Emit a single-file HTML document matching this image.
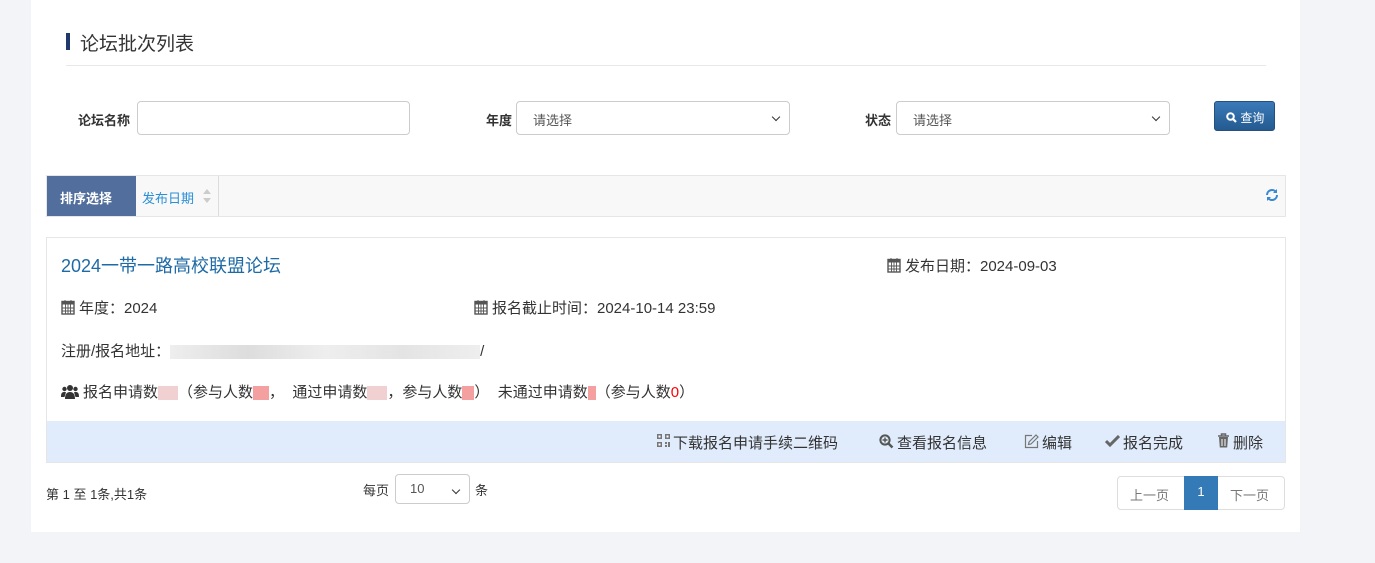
<!DOCTYPE html>
<html><head><meta charset="utf-8"><style>
*{box-sizing:border-box;margin:0;padding:0}
body{width:1375px;height:563px;background:#f3f4f8;font-family:"Liberation Sans","Noto Sans CJK SC",sans-serif;position:relative;overflow:hidden;color:#333}
.p{position:absolute;left:31px;top:0;width:1269px;height:532px;background:#fff}
.a{position:absolute}
.lbl{font-size:13px;font-weight:bold;color:#333}
.inp{border:1px solid #ccc;border-radius:4px;height:34px;background:#fff;font-size:13px;color:#555;padding:8px 16px}
.sel::after{content:"";position:absolute;right:10px;top:12px;width:5px;height:5px;border-right:1.5px solid #333;border-bottom:1.5px solid #333;transform:rotate(45deg)}
.t14{font-size:15px;color:#333;white-space:nowrap}
.blur{display:inline-block;height:14px;vertical-align:middle;background:#f0d0d0}
.ic{vertical-align:-2px;margin-right:4px}
</style></head><body>
<div class="p"></div>
<div class="a" style="left:66px;top:33px;width:4px;height:17px;background:#1f3a6a"></div>
<div class="a" style="left:80px;top:29px;font-size:19px;color:#333">论坛批次列表</div>
<div class="a" style="left:66px;top:65px;width:1200px;height:1px;background:#e8e8e8"></div>

<div class="a lbl" style="left:78px;top:110px">论坛名称</div>
<div class="a inp" style="left:137px;top:101px;width:273px"></div>
<div class="a lbl" style="left:486px;top:110px">年度</div>
<div class="a inp sel" style="left:516px;top:101px;width:274px">请选择</div>
<div class="a lbl" style="left:865px;top:110px">状态</div>
<div class="a inp sel" style="left:896px;top:101px;width:274px">请选择</div>
<div class="a" style="left:1214px;top:101px;width:61px;height:30px;border-radius:3px;background:linear-gradient(#3a7ab8,#245a90);border:1px solid #245080;color:#fff;font-size:12px;padding:7px 0 0 11px"><svg width="11" height="11" viewBox="0 0 11 11" style="vertical-align:-1px"><circle cx="4.5" cy="4.5" r="3.3" fill="none" stroke="#fff" stroke-width="2"/><path d="M7 7l3 3" stroke="#fff" stroke-width="2.2"/></svg> 查询</div>

<div class="a" style="left:46px;top:175px;width:1240px;height:42px;background:#f8f8f8;border:1px solid #e6e6e6"></div>
<div class="a" style="left:47px;top:176px;width:89px;height:40px;background:#526e9c;color:#fff;font-size:13px;font-weight:bold;padding:12px 0 0 13px">排序选择</div>
<div class="a" style="left:136px;top:176px;width:83px;height:40px;border-right:1px solid #ddd;color:#2a8fd6;font-size:13px;padding:12px 0 0 6px">发布日期</div>
<svg class="a" style="left:203px;top:189px" width="8" height="14" viewBox="0 0 8 14"><path d="M4 0L8 5H0z M4 14L8 9H0z" fill="#ccc"/></svg>
<svg class="a" style="left:1265px;top:188px" width="14" height="14" viewBox="0 0 14 14"><path d="M2 7a5 5 0 0 1 9-3" fill="none" stroke="#3a88d0" stroke-width="2"/><path d="M12 7a5 5 0 0 1-9 3" fill="none" stroke="#3a88d0" stroke-width="2"/><path d="M12 1v4h-4z M2 13v-4h4z" fill="#3a88d0"/></svg>

<svg width="0" height="0" style="position:absolute"><defs><symbol id="cal" viewBox="0 0 14 16"><rect x="1" y="2.5" width="12" height="12.5" fill="none" stroke="#555" stroke-width="1.4"/><rect x="1" y="2.5" width="12" height="3" fill="#555"/><path d="M4 1v3M10 1v3M1 9h12M1 12h12M4.5 5v10M7 5v10M9.5 5v10" stroke="#555" stroke-width="0.9"/></symbol></defs></svg>

<div class="a" style="left:46px;top:237px;width:1240px;height:226px;border:1px solid #e6e6e6"></div>
<div class="a" style="left:61px;top:252px;font-size:18px;color:#1e6aa6">2024一带一路高校联盟论坛</div>
<div class="a t14" style="left:887px;top:255px"><svg class="ic" width="14" height="16"><use href="#cal"/></svg>发布日期：2024-09-03</div>
<div class="a t14" style="left:61px;top:297px"><svg class="ic" width="14" height="16"><use href="#cal"/></svg>年度：2024</div>
<div class="a t14" style="left:474px;top:297px"><svg class="ic" width="14" height="16"><use href="#cal"/></svg>报名截止时间：2024-10-14 23:59</div>
<div class="a t14" style="left:61px;top:340px">注册/报名地址：<span class="blur" style="width:310px;background:linear-gradient(90deg,#eee,#ddd,#eee,#e4e4e4,#eee)"></span>/</div>
<div class="a t14" style="left:61px;top:381px"><svg class="ic" width="18" height="15" viewBox="0 0 18 15"><circle cx="9" cy="4" r="3" fill="#333"/><circle cx="3.5" cy="5" r="2.2" fill="#333"/><circle cx="14.5" cy="5" r="2.2" fill="#333"/><path d="M4 15c0-5 2-7 5-7s5 2 5 7z M0 13c0-4 1-5 3.5-5 1 0 1.5.3 1.5.3L3.5 13z M18 13c0-4-1-5-3.5-5-1 0-1.5.3-1.5.3l1.5 4.7z" fill="#333"/></svg>报名申请数<span class="blur" style="width:20px"></span>（参与人数<span class="blur" style="width:16px;background:#f5a0a0"></span>，&nbsp; 通过申请数<span class="blur" style="width:20px"></span>，参与人数<span class="blur" style="width:12px;background:#f5a0a0"></span>）&nbsp; 未通过申请数<span class="blur" style="width:8px;background:#f5a0a0"></span>（参与人数<span style="color:red">0</span>）</div>
<div class="a" style="left:47px;top:421px;width:1238px;height:41px;background:#e0ecfc"></div>
<svg class="a" style="left:657px;top:434px" width="13" height="13" viewBox="0 0 13 13"><path d="M0 0h5v5H0zM8 0h5v5H8zM0 8h5v5H0zM8 8h2v2H8zM11 8h2v5h-2zM8 11h2v2H8z" fill="#777"/><path d="M1.5 1.5h2v2h-2zM9.5 1.5h2v2h-2zM1.5 9.5h2v2h-2z" fill="#fff"/></svg>
<div class="a t14" style="left:673px;top:432px">下载报名申请手续二维码</div>
<svg class="a" style="left:879px;top:434px" width="15" height="15" viewBox="0 0 15 15"><circle cx="6" cy="6" r="4.6" fill="none" stroke="#555" stroke-width="2"/><path d="M9.5 9.5l4 4" stroke="#555" stroke-width="2.4"/><path d="M6 3.5v5M3.5 6h5" stroke="#555" stroke-width="1.4"/></svg>
<div class="a t14" style="left:897px;top:432px">查看报名信息</div>
<svg class="a" style="left:1024px;top:434px" width="15" height="15" viewBox="0 0 15 15"><path d="M8 1.5H1.5v12h12V7" fill="none" stroke="#777" stroke-width="1.2"/><path d="M12 1l2 2-7 7-2.5.5L5 8z" fill="none" stroke="#777" stroke-width="1.2"/></svg>
<div class="a t14" style="left:1042px;top:432px">编辑</div>
<svg class="a" style="left:1105px;top:435px" width="15" height="12" viewBox="0 0 15 12"><path d="M1 6l4 4 9-9" fill="none" stroke="#666" stroke-width="3"/></svg>
<div class="a t14" style="left:1123px;top:432px">报名完成</div>
<svg class="a" style="left:1217px;top:433px" width="13" height="15" viewBox="0 0 13 15"><path d="M1 3h11M4.5 3V1h4v2" fill="none" stroke="#666" stroke-width="1.5"/><path d="M2 4h9l-.8 10.5H2.8z" fill="#666"/><path d="M5 6v7M8 6v7" stroke="#fff" stroke-width="1"/></svg>
<div class="a t14" style="left:1233px;top:432px">删除</div>

<div class="a" style="left:46px;top:484px;font-size:13px">第 1 至 1条,共1条</div>
<div class="a" style="left:363px;top:480px;font-size:13px">每页</div>
<div class="a inp sel" style="left:395px;top:474px;width:75px;height:30px;padding:6px 14px">10</div>
<div class="a" style="left:475px;top:480px;font-size:13px">条</div>
<div class="a" style="left:1117px;top:476px;width:168px;height:34px;border:1px solid #ddd;border-radius:4px;font-size:13px;color:#777">
<span class="a" style="left:12px;top:8px">上一页</span>
<span class="a" style="left:66px;top:-1px;width:34px;height:34px;background:#337ab7;color:#fff;text-align:center;padding-top:8px">1</span>
<span class="a" style="left:112px;top:8px">下一页</span></div>
</body></html>
